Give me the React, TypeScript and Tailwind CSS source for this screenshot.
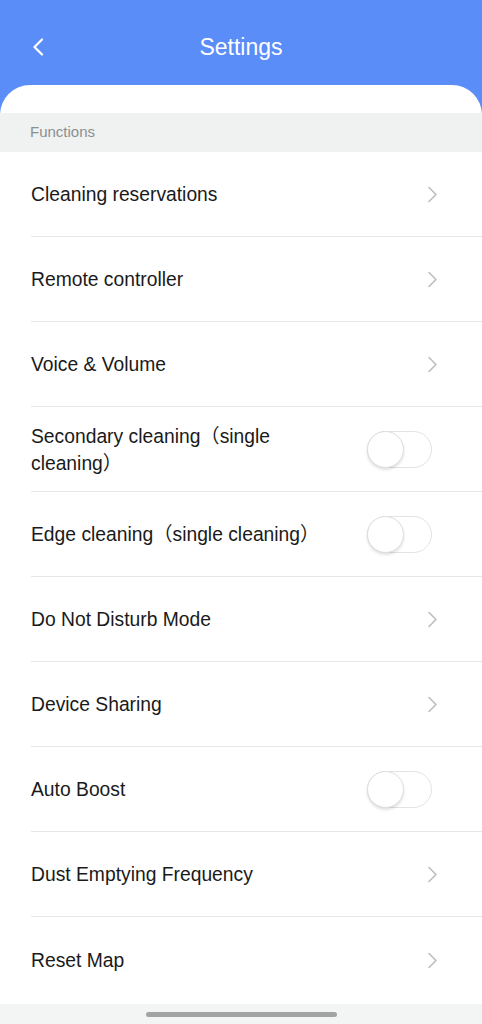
import React from "react";

type Item = { label: string; kind: "link" | "toggle" };

const items: Item[] = [
  { label: "Cleaning reservations", kind: "link" },
  { label: "Remote controller", kind: "link" },
  { label: "Voice & Volume", kind: "link" },
  { label: "Secondary cleaning（single cleaning）", kind: "toggle" },
  { label: "Edge cleaning（single cleaning）", kind: "toggle" },
  { label: "Do Not Disturb Mode", kind: "link" },
  { label: "Device Sharing", kind: "link" },
  { label: "Auto Boost", kind: "toggle" },
  { label: "Dust Emptying Frequency", kind: "link" },
  { label: "Reset Map", kind: "link" },
];

function Chevron() {
  return (
    <svg width="11" height="17" viewBox="0 0 11 17" className="mr-[44px]">
      <polyline
        points="2,1.5 9,8.5 2,15.5"
        fill="none"
        stroke="#bdbdbd"
        strokeWidth="1.6"
        strokeLinecap="round"
        strokeLinejoin="round"
      />
    </svg>
  );
}

function Toggle() {
  return (
    <div className="mr-[50px] flex h-[37px] w-[65px] shrink-0 items-center rounded-full border-[1.5px] border-[#e3e3e3] bg-white">
      <div className="ml-[-1.5px] h-[37px] w-[37px] rounded-full border-[1.5px] border-[#dedede] bg-white shadow-[0_2px_3px_rgba(0,0,0,0.12)]" />
    </div>
  );
}

export default function App() {
  return (
    <div
      className="flex h-[1024px] w-[482px] flex-col overflow-hidden bg-[#5a8df7]"
      style={{ fontFamily: '"Liberation Sans", Arial, "Noto Sans CJK SC", sans-serif' }}
    >
      <div className="relative flex h-[85px] shrink-0 items-center justify-center pt-[9px]">
        <svg width="12" height="18" viewBox="0 0 12 18" className="absolute left-[32px] top-[38px]">
          <polyline
            points="10,1.5 2.5,9 10,16.5"
            fill="none"
            stroke="#ffffff"
            strokeWidth="2.2"
            strokeLinecap="round"
            strokeLinejoin="round"
          />
        </svg>
        <span className="text-[23px] text-white">Settings</span>
      </div>
      <div className="flex flex-1 flex-col rounded-t-[30px] bg-white pt-[28px]">
        <div className="flex h-[39px] shrink-0 items-center bg-[#eff2f1] pl-[30px] text-[15px] text-[#8b9090]">
          Functions
        </div>
        <div className="flex flex-col">
          {items.map((it, i) => (
            <div
              key={i}
              className={`ml-[31px] flex h-[85px] items-center pt-[1px] ${
                i < items.length - 1 ? "border-b border-[#e6e6e6]" : ""
              }`}
            >
              <div className="flex-1 pr-[30px] text-[19.3px] leading-[27px] text-[#1a1a1a]">
                {it.label}
              </div>
              {it.kind === "link" ? <Chevron /> : <Toggle />}
            </div>
          ))}
        </div>
        <div className="mt-auto flex h-[20px] items-start justify-center bg-[#f3f4f4] pt-[8px]">
          <div className="h-[5px] w-[191px] rounded-full bg-[#a3a3a3]" />
        </div>
      </div>
    </div>
  );
}
